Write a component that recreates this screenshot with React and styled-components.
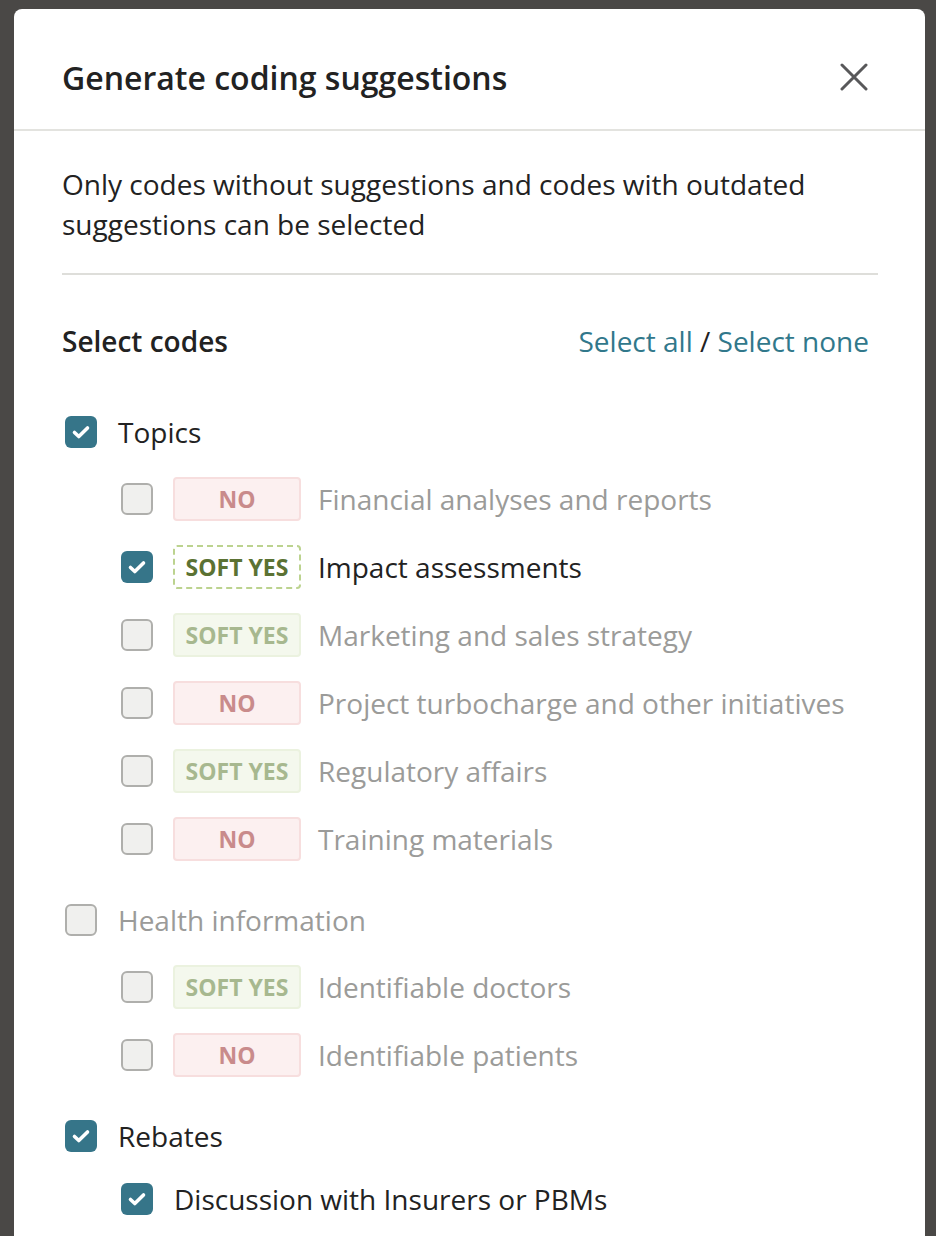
import React from "react";
import styled, { createGlobalStyle, css } from "styled-components";

const Global = createGlobalStyle`
  html, body { margin: 0; padding: 0; overflow: hidden; }
  body { font-family: "Open Sans", "Noto Sans", sans-serif; }
  * { box-sizing: border-box; }
`;

const Backdrop = styled.div`
  width: 936px;
  height: 1236px;
  overflow: hidden;
  background: #4a4846;
  padding: 9px 0 0 14px;
`;

const Modal = styled.div`
  width: 911px;
  min-height: 1300px;
  background: #ffffff;
  border-radius: 8px 8px 0 0;
  color: #222222;
`;

const Header = styled.div`
  height: 122px;
  display: flex;
  align-items: center;
  justify-content: space-between;
  padding: 16px 57px 0 48px;
  border-bottom: 2px solid #e3e3df;
`;

const Title = styled.h2`
  margin: 0;
  font-size: 32px;
  font-weight: 600;
  color: #222222;
`;

const CloseButton = styled.button`
  width: 28px;
  height: 28px;
  padding: 0;
  border: none;
  background: none;
  display: flex;
  cursor: pointer;
`;

const Body = styled.div`
  padding: 33px 47px 40px 48px;
`;

const Description = styled.p`
  margin: 0;
  font-size: 28px;
  line-height: 40px;
  color: #222222;
`;

const Divider = styled.hr`
  margin: 29px 0 46px;
  border: none;
  border-top: 2px solid #dededa;
`;

const SectionHead = styled.div`
  display: flex;
  justify-content: space-between;
  align-items: center;
  height: 40px;
  margin-bottom: 51px;
`;

const SectionTitle = styled.h3`
  margin: 0;
  font-size: 28px;
  font-weight: 600;
`;

const Links = styled.div`
  font-size: 28px;
  color: #222;
  padding-right: 9px;
`;

const LinkText = styled.a`
  color: #31788b;
  text-decoration: none;
  cursor: pointer;
`;

const Groups = styled.div`
  display: flex;
  flex-direction: column;
  gap: 39px;
`;

const Group = styled.div`
  display: flex;
  flex-direction: column;
  gap: 25px;
`;

const Row = styled.label`
  display: flex;
  align-items: center;
  min-height: ${(p) => (p.$parent ? "40px" : "36px")};
`;

const Children = styled.div`
  display: flex;
  flex-direction: column;
  gap: 24px;
  padding-left: 59px;
`;

const Box = styled.span`
  flex: none;
  width: 32px;
  height: 32px;
  border-radius: 6px;
  display: flex;
  align-items: center;
  justify-content: center;
  margin-left: ${(p) => (p.$parent ? "3px" : "0")};
  ${(p) =>
    p.$checked
      ? css`
          background: #367589;
          border: none;
        `
      : css`
          background: #f0f0ee;
          border: 2px solid #afafac;
        `}
`;

const Label = styled.span`
  font-size: 28px;
  line-height: 36px;
  margin-left: ${(p) => p.$gap}px;
  color: ${(p) => (p.$active ? "#222222" : "#9b9b99")};
`;

const badgeStyles = {
  no: css`
    background: #fcf0f0;
    border: 2px solid #f7dede;
    color: #c98b8b;
  `,
  soft: css`
    background: #f4f8ed;
    border: 2px solid #ebf2df;
    color: #a7b88f;
  `,
  softActive: css`
    background: #ffffff;
    border: 2px dashed #bcd38f;
    color: #5b7233;
  `,
};

const Badge = styled.span`
  flex: none;
  width: 128px;
  height: 44px;
  margin-left: 20px;
  border-radius: 4px;
  display: flex;
  align-items: center;
  justify-content: center;
  font-size: 23px;
  font-weight: 700;
  ${(p) => badgeStyles[p.$kind]}
`;

const Check = () => (
  <svg width="32" height="32" viewBox="0 0 32 32" fill="none">
    <path
      d="M9.5 16.5 L13.8 20.5 L22.5 12"
      stroke="#ffffff"
      strokeWidth="3.6"
      strokeLinecap="round"
      strokeLinejoin="round"
    />
  </svg>
);

const Checkbox = ({ checked, parent }) => (
  <Box $checked={checked} $parent={parent}>
    {checked && <Check />}
  </Box>
);

const groups = [
  {
    name: "Topics",
    checked: true,
    items: [
      { name: "Financial analyses and reports", badge: "no" },
      { name: "Impact assessments", badge: "softActive", checked: true },
      { name: "Marketing and sales strategy", badge: "soft" },
      { name: "Project turbocharge and other initiatives", badge: "no" },
      { name: "Regulatory affairs", badge: "soft" },
      { name: "Training materials", badge: "no" },
    ],
  },
  {
    name: "Health information",
    checked: false,
    items: [
      { name: "Identifiable doctors", badge: "soft" },
      { name: "Identifiable patients", badge: "no" },
    ],
  },
  {
    name: "Rebates",
    checked: true,
    items: [{ name: "Discussion with Insurers or PBMs", checked: true }],
  },
];

export default function App() {
  return (
    <>
      <Global />
      <Backdrop>
        <Modal>
          <Header>
            <Title>Generate coding suggestions</Title>
            <CloseButton aria-label="Close">
              <svg width="28" height="28" viewBox="0 0 28 28">
                <path
                  d="M2 2 L26 26 M26 2 L2 26"
                  stroke="#58585a"
                  strokeWidth="3"
                  strokeLinecap="round"
                />
              </svg>
            </CloseButton>
          </Header>
          <Body>
            <Description>
              Only codes without suggestions and codes with outdated
              suggestions can be selected
            </Description>
            <Divider />
            <SectionHead>
              <SectionTitle>Select codes</SectionTitle>
              <Links>
                <LinkText>Select all</LinkText> / <LinkText>Select none</LinkText>
              </Links>
            </SectionHead>
            <Groups>
              {groups.map((g) => (
                <Group key={g.name}>
                  <Row $parent>
                    <Checkbox checked={g.checked} parent />
                    <Label $gap={21} $active={g.checked}>
                      {g.name}
                    </Label>
                  </Row>
                  <Children>
                    {g.items.map((it) => (
                      <Row key={it.name}>
                        <Checkbox checked={!!it.checked} />
                        {it.badge && (
                          <Badge $kind={it.badge}>
                            {it.badge === "no" ? "NO" : "SOFT YES"}
                          </Badge>
                        )}
                        <Label $gap={it.badge ? 17 : 21} $active={!!it.checked}>
                          {it.name}
                        </Label>
                      </Row>
                    ))}
                  </Children>
                </Group>
              ))}
            </Groups>
          </Body>
        </Modal>
      </Backdrop>
    </>
  );
}
